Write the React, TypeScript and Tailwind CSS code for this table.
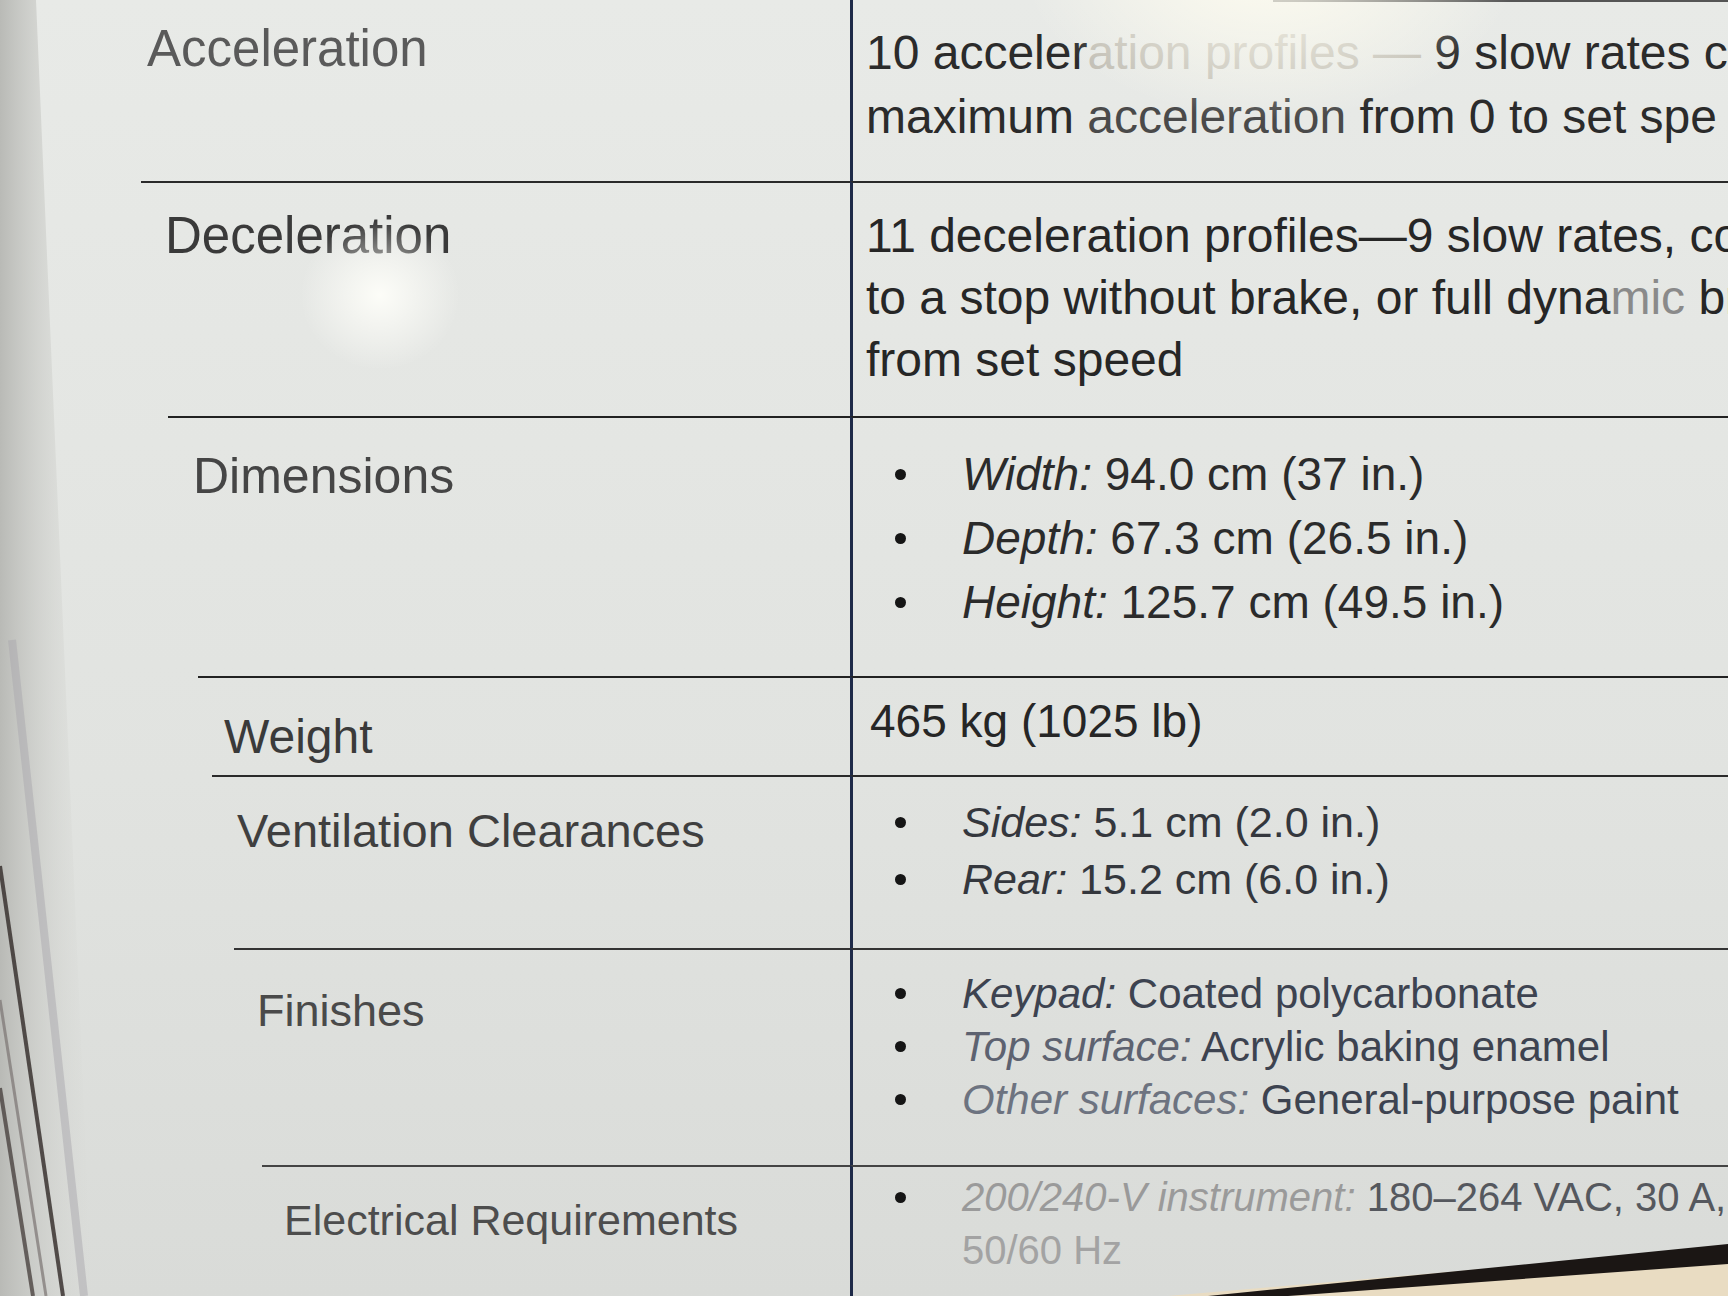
import React from "react";

function Bullet({ children }: { children: React.ReactNode }) {
  return (
    <div className="flex items-center whitespace-nowrap">
      <span className="w-[109px] shrink-0 pl-[42px] flex items-center">
        <span className="w-[11px] h-[11px] rounded-full bg-[#151515]" />
      </span>
      <span>{children}</span>
    </div>
  );
}

export default function App() {
  return (
    <div className="relative w-[1728px] h-[1296px] overflow-hidden bg-[linear-gradient(to_bottom,#e8eae7,#e1e3e0_60%,#d9dbd8)] font-['Liberation_Sans','Arial',sans-serif]">
      <div className="flex flex-col">
        {/* Acceleration */}
        <div className="flex h-[181px]">
          <div className="w-[850px] shrink-0 pl-[147px] pt-[18px] text-[51px] leading-[62px] text-[#5a5a5a]">
            Acceleration
          </div>
          <div className="flex-1 flex flex-col border-l-[3px] border-[#1e2a48]">
            <div className="ml-[420px] border-t-2 border-[#555]" />
            <div className="pl-[13px] pt-[19px] text-[48px] leading-[64px] text-[#2b2b2b] whitespace-nowrap">
              <div>
                10 acceler<span className="text-[#c2bfb6]">ation profiles —</span> 9 slow rates c
              </div>
              <div>
                maximum <span className="text-[#4a4a4a]">acceleration</span> from 0 to set spe
              </div>
            </div>
          </div>
        </div>

        {/* Deceleration */}
        <div className="flex h-[235px]">
          <div className="w-[850px] shrink-0 flex flex-col">
            <div className="ml-[141px] flex-1 border-t-2 border-[#2a2a2a] pl-[24px] pt-[22px] text-[51px] leading-[62px] text-[#3a3a3a]">
              Deceleration
            </div>
          </div>
          <div className="flex-1 border-l-[3px] border-t-2 border-l-[#1e2a48] border-t-[#2a2a2a] pl-[13px] pt-[22px] text-[48px] leading-[62px] text-[#262626] whitespace-nowrap">
            <div>11 deceleration profiles—9 slow rates, co</div>
            <div>
              to a stop without brake, or full dyna<span className="text-[#8a8a8a]">mic</span> br
            </div>
            <div>from set speed</div>
          </div>
        </div>

        {/* Dimensions */}
        <div className="flex h-[260px]">
          <div className="w-[850px] shrink-0 flex flex-col">
            <div className="ml-[168px] flex-1 border-t-2 border-[#222] pl-[25px] pt-[27px] text-[50px] leading-[62px] text-[#454545]">
              Dimensions
            </div>
          </div>
          <div className="flex-1 border-l-[3px] border-t-2 border-l-[#1e2a48] border-t-[#222] pt-[24px] text-[46px] leading-[64px] text-[#2b2b2b]">
            <Bullet>
              <i>Width:</i> 94.0 cm (37 in.)
            </Bullet>
            <Bullet>
              <i>Depth:</i> 67.3 cm (26.5 in.)
            </Bullet>
            <Bullet>
              <i>Height:</i> 125.7 cm (49.5 in.)
            </Bullet>
          </div>
        </div>

        {/* Weight */}
        <div className="flex h-[99px]">
          <div className="w-[850px] shrink-0 flex flex-col">
            <div className="ml-[198px] flex-1 border-t-2 border-[#222] pl-[26px] pt-[28px] text-[48px] leading-[62px] text-[#3a3a3a]">
              Weight
            </div>
          </div>
          <div className="flex-1 border-l-[3px] border-t-2 border-l-[#1e2a48] border-t-[#222] pl-[17px] pt-[12px] text-[46px] leading-[62px] text-[#262626]">
            465 kg (1025 lb)
          </div>
        </div>

        {/* Ventilation Clearances */}
        <div className="flex h-[173px]">
          <div className="w-[850px] shrink-0 flex flex-col">
            <div className="ml-[212px] flex-1 border-t-2 border-[#2a2a2a] pl-[25px] pt-[23px] text-[47px] leading-[62px] text-[#3f3f3f] whitespace-nowrap">
              Ventilation Clearances
            </div>
          </div>
          <div className="flex-1 border-l-[3px] border-t-2 border-l-[#1e2a48] border-t-[#2a2a2a] pt-[17px] text-[43px] leading-[57px] text-[#34373d]">
            <Bullet>
              <i>Sides:</i> 5.1 cm (2.0 in.)
            </Bullet>
            <Bullet>
              <i>Rear:</i> 15.2 cm (6.0 in.)
            </Bullet>
          </div>
        </div>

        {/* Finishes */}
        <div className="flex h-[217px]">
          <div className="w-[850px] shrink-0 flex flex-col">
            <div className="ml-[234px] flex-1 border-t-2 border-[#333] pl-[23px] pt-[30px] text-[45px] leading-[62px] text-[#4a4a4a]">
              Finishes
            </div>
          </div>
          <div className="flex-1 border-l-[3px] border-t-2 border-l-[#1e2a48] border-t-[#333] pt-[17px] text-[42px] leading-[53px] text-[#3d4350]">
            <Bullet>
              <i>Keypad:</i> Coated polycarbonate
            </Bullet>
            <Bullet>
              <i className="text-[#5d6270]">Top surface:</i> Acrylic baking enamel
            </Bullet>
            <Bullet>
              <i className="text-[#6d7380]">Other surfaces:</i> General-purpose paint
            </Bullet>
          </div>
        </div>

        {/* Electrical Requirements */}
        <div className="flex h-[131px]">
          <div className="w-[850px] shrink-0 flex flex-col">
            <div className="ml-[262px] flex-1 border-t-2 border-[#444] pl-[22px] pt-[22px] text-[43px] leading-[62px] text-[#4d4d4d] whitespace-nowrap">
              Electrical Requirements
            </div>
          </div>
          <div className="flex-1 border-l-[3px] border-t-2 border-l-[#1e2a48] border-t-[#444] pt-[4px] text-[40px] leading-[53px] text-[#55585e]">
            <Bullet>
              <i className="text-[#9a9a9a]">200/240-V instrument:</i> 180–264 VAC, 30 A,
            </Bullet>
            <div className="pl-[109px] text-[#a3a3a3]">50/60 Hz</div>
          </div>
        </div>
      </div>

      {/* glare on the screen */}
      <div className="pointer-events-none absolute left-[1020px] top-[-200px] w-[500px] h-[320px] rounded-full bg-[radial-gradient(closest-side,rgba(255,253,240,0.95),rgba(255,253,240,0.45)_55%,rgba(255,255,255,0))]" />
      <div className="pointer-events-none absolute left-[300px] top-[220px] w-[160px] h-[150px] rounded-full bg-[radial-gradient(closest-side,rgba(255,255,250,0.9),rgba(255,255,255,0))]" />

      {/* monitor edge on the left */}
      <svg className="pointer-events-none absolute left-0 top-0" width="120" height="1296" viewBox="0 0 120 1296">
        <defs>
          <linearGradient id="edge" x1="0" x2="1" y1="0" y2="0">
            <stop offset="0" stopColor="#b9bab6" />
            <stop offset="1" stopColor="#d6d7d3" stopOpacity="0" />
          </linearGradient>
        </defs>
        <polygon points="0,0 36,0 92,1296 0,1296" fill="url(#edge)" />
        <line x1="0" y1="866" x2="63" y2="1296" stroke="#3a3230" strokeWidth="4" strokeOpacity="0.85" />
        <line x1="0" y1="1000" x2="46" y2="1296" stroke="#7a7472" strokeWidth="3" strokeOpacity="0.7" />
        <line x1="0" y1="1088" x2="33" y2="1296" stroke="#4a4240" strokeWidth="4" strokeOpacity="0.8" />
        <line x1="12" y1="640" x2="84" y2="1296" stroke="#a9a8ae" strokeWidth="8" strokeOpacity="0.5" />
      </svg>

      {/* bezel at the bottom right */}
      <svg className="pointer-events-none absolute right-0 bottom-0" width="560" height="60" viewBox="0 0 560 60">
        <polygon points="0,60 560,12 560,60" fill="#e9dcc2" />
        <polygon points="40,60 560,8 560,28 120,60" fill="#1b1614" />
      </svg>
    </div>
  );
}
